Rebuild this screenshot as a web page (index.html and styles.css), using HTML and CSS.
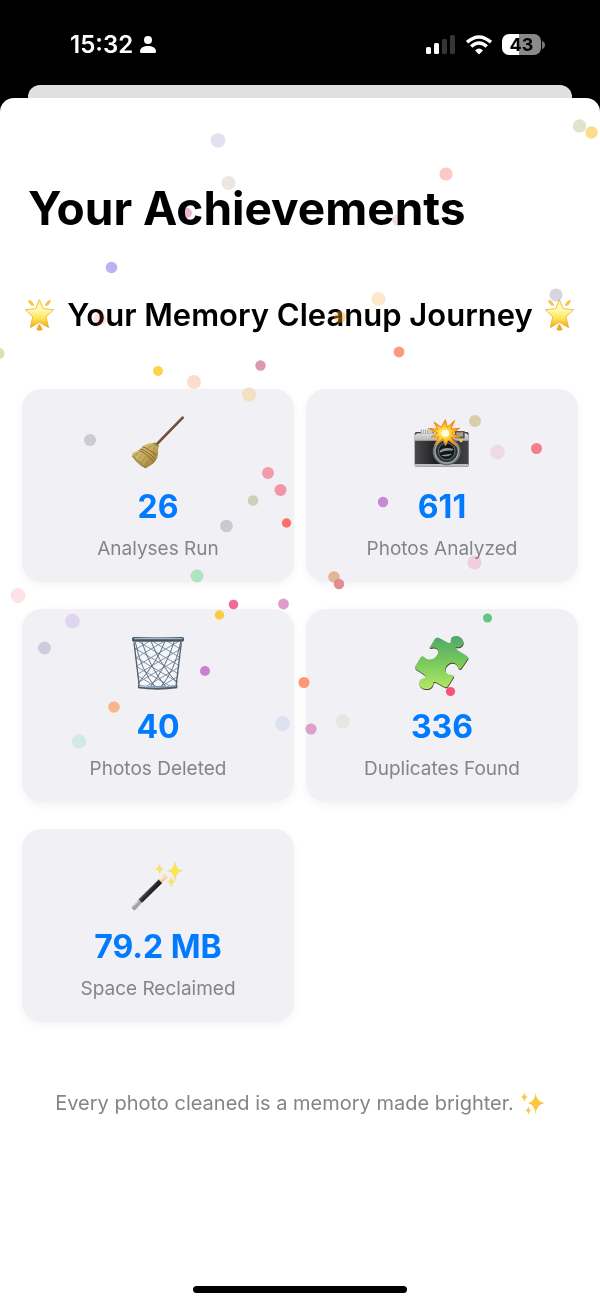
FILE: index.html
```html
<!DOCTYPE html>
<html lang="en">
<head>
<meta charset="utf-8">
<meta name="viewport" content="width=device-width, initial-scale=1">
<title>Your Achievements</title>
<link rel="stylesheet" href="styles.css">
</head>
<body>
<svg width="0" height="0" class="defs" aria-hidden="true">
  <defs>
    <linearGradient id="starFill" x1="0" y1="0" x2="0" y2="1"><stop offset="0" stop-color="#fff08a"/><stop offset=".35" stop-color="#fff9b8"/><stop offset=".65" stop-color="#fde75a"/><stop offset="1" stop-color="#f5a60c"/></linearGradient>
    <linearGradient id="straw" x1="0" y1="0" x2="1" y2="1"><stop offset="0" stop-color="#e0cf86"/><stop offset=".5" stop-color="#c5ac5e"/><stop offset="1" stop-color="#876a2b"/></linearGradient>
    <linearGradient id="silver" x1="0" y1="0" x2="0" y2="1"><stop offset="0" stop-color="#dededf"/><stop offset="1" stop-color="#b5b5b8"/></linearGradient>
    <linearGradient id="leather" x1="0" y1="0" x2="1" y2="0"><stop offset="0" stop-color="#4a4a4c"/><stop offset=".45" stop-color="#19191b"/><stop offset="1" stop-color="#454547"/></linearGradient>
    <radialGradient id="burst"><stop offset="0" stop-color="#fffbd0"/><stop offset=".3" stop-color="#ffe14a"/><stop offset="1" stop-color="#f58a0b"/></radialGradient>
    <linearGradient id="piece" x1="0" y1="0" x2="0" y2="1"><stop offset="0" stop-color="#4ea76a"/><stop offset=".5" stop-color="#79c95c"/><stop offset="1" stop-color="#b2e966"/></linearGradient>
    <linearGradient id="rod" gradientUnits="userSpaceOnUse" x1="112" y1="132" x2="126" y2="144"><stop offset="0" stop-color="#5b5b60"/><stop offset=".5" stop-color="#303034"/><stop offset="1" stop-color="#19191b"/></linearGradient>
    <clipPath id="basket"><path d="M70 64 86 202H201L216 64Z"/></clipPath>
    <symbol id="star" viewBox="78 178 90 96">
      <path d="M121 180 133 207 164 210 141 231 149 264 121 248 94 264 101 231 79 210 110 207Z" fill="url(#starFill)" stroke="#eeb32f" stroke-width="2.5" stroke-linejoin="round"/>
      <path d="M88 182Q98 181 105 197Q94 202 88 182ZM155 182Q145 181 138 197Q149 202 155 182Z" fill="#fac83c" stroke="#e7a82d"/>
      <path d="M121 253 130 269Q121 276 113 269Z" fill="#f5a91c" stroke="#d98c16"/>
    </symbol>
  </defs>
</svg>
<div class="phone">
  <header class="status">
    <div class="status-side">
      <span class="clock">15:32</span>
      <svg class="person" viewBox="0 0 16 17" aria-hidden="true"><circle cx="8" cy="4" r="4"/><path d="M0 15.500C0 11.500 4 10 8 10s8 1.500 8 5.500q0 1.500-1.500 1.500h-13Q0 17 0 15.500Z"/></svg>
    </div>
    <div class="status-side">
      <svg class="signal" viewBox="0 0 30 20" aria-hidden="true"><rect x="0" y="12" width="5" height="7" rx="1.500"/><rect x="8" y="8" width="5" height="11" rx="1.500"/><g fill="#363636"><rect x="16" y="4" width="5" height="15" rx="1.500"/><rect x="24" y="0" width="5" height="19" rx="1.500"/></g></svg>
      <svg class="wifi" viewBox="0 0 26 20" aria-hidden="true"><g fill="none" stroke="#fff" stroke-width="3.400"><path d="M1 7.200Q13-3.200 25 7.200"/><path d="M5.200 11.600Q13 4.600 20.800 11.600"/></g><path d="M9 15.400Q13 11.600 17 15.400L13 19.500Z"/></svg>
      <div class="battery"><span class="battery-level">43</span><svg class="battery-cap" viewBox="0 0 3 8" aria-hidden="true"><path d="M0 0Q3 1 3 4T0 8Z"/></svg></div>
    </div>
  </header>
  <div class="sheet-behind"></div>
  <main class="sheet">
    <h1 class="title">Your Achievements</h1>
    <h2 class="subtitle"><svg class="star" aria-hidden="true"><use href="#star"/></svg><span>Your Memory Cleanup Journey</span><svg class="star" aria-hidden="true"><use href="#star"/></svg></h2>
    <section class="stats">
      <article class="card">
        <svg class="icon" viewBox="60 39 168 168" aria-hidden="true">
          <path d="M142 131 218 53" stroke="#6d4936" stroke-width="8" stroke-linecap="round"/><path d="M142 128 217 51" stroke="#96705a" stroke-width="2"/>
          <path d="M132 128 147 137 144 149Q147 175 129 191L108 205Q82 194 66 170L67 159Q88 151 97 140 108 129 132 128Z" fill="url(#straw)"/>
          <path d="M98 140Q112 144 139 166M92 147Q110 152 134 176M88 152Q106 158 129 183" fill="none" stroke="#7c4b22" stroke-width="2.500"/>
          <path d="M131 134 112 145M136 138 128 159M87 157 75 170M97 162 84 180M108 168 94 189M118 177 104 200M82 160 70 167" stroke="#8d7132" stroke-width="1.500"/><path d="M131 129 145 138" stroke="#8a8540" stroke-width="5"/>
          <path d="M66 169 75 173 79 182 88 185 94 196 108 204" fill="none" stroke="#7b5a25" stroke-width="2"/>
        </svg>
        <strong class="value">26</strong><span class="label">Analyses Run</span>
      </article>
      <article class="card">
        <svg class="icon" viewBox="40 39 168 168" aria-hidden="true">
          <rect x="42" y="96" width="162" height="104" rx="5" fill="url(#leather)"/><path d="M42 122V109Q44 100 54 100H192Q202 100 204 110V122Z" fill="url(#silver)"/>
          <path d="M60 89H98V102H60Z" fill="#a3a7aa"/><path d="M65 89V101M71 89V101M78 89V101M85 89V101M91 89V101" stroke="#eef0f1" stroke-width="3"/>
          <path d="M102 86H160L164 104H98Z" fill="#d4d4d5"/><rect x="163" y="93" width="29" height="22" fill="#57534e"/><rect x="167" y="97" width="20" height="13" fill="#aaa28b"/>
          <path d="M43 192H203V196Q203 200 198 200H48Q43 200 43 196Z" fill="#bcbdbe"/>
          <circle cx="138" cy="154" r="42" fill="#646c6e"/><circle cx="138" cy="154" r="37" fill="#a2abad"/><circle cx="138" cy="154" r="33" fill="#2e3538"/><circle cx="138" cy="154" r="25" fill="#111719" stroke="#667175" stroke-width="3"/>
          <path d="M117 153Q130 139 158 147L154 152Q134 150 117 158ZM121 166Q139 174 155 161" fill="#8d999d"/>
          <circle cx="181" cy="122" r="5" fill="#f5cb35"/>
          <path d="M134 59 140 82 162 61 151 87 177 85 153 100 177 112 151 112 168 139 143 120 134 137 127 117 102 135 114 111 91 111 111 99 83 85 111 88 100 66 122 82Z" fill="url(#burst)" stroke="#ed8a0c" stroke-width="3"/><circle cx="134" cy="100" r="11" fill="#fffde0"/>
        </svg>
        <strong class="value">611</strong><span class="label">Photos Analyzed</span>
      </article>
      <article class="card">
        <svg class="icon" viewBox="60 39 168 168" aria-hidden="true">
          <path d="M68 59 85 202Q144 211 202 202L218 59Z" fill="#f3f6fa"/>
          <g clip-path="url(#basket)" fill="none" stroke-width="3"><path stroke="#8794a1" d="M60 50 230 150M60 76 230 176M60 102 230 202M60 128 230 228M60 154 230 254M60 180 230 280M100 48 230 124M145 48 230 98M230 50 60 150M230 76 60 176M230 102 60 202M230 128 60 228M230 154 60 254M230 180 60 280M190 48 60 124M145 48 60 98"/><path stroke="#626f7c" d="M76 66Q92 150 138 204M96 66Q118 140 170 204M124 66Q148 130 202 190M212 66Q196 150 150 204M192 66Q170 140 118 204M164 66Q140 130 84 190"/></g>
          <path d="M72 67 88 200M214 67 198 200" stroke="#56616d" stroke-width="4"/>
          <rect x="66" y="51" width="156" height="14" rx="5" fill="#46535f"/><path d="M72 54Q144 49 217 54V58H72Z" fill="#a4b7c7"/>
          <path d="M84 195Q144 203 202 195V205Q144 213 84 205Z" fill="#4e5b68"/><path d="M88 196Q144 204 198 196V199Q144 207 88 200Z" fill="#b3cae1"/>
        </svg>
        <strong class="value">40</strong><span class="label">Photos Deleted</span>
      </article>
      <article class="card">
        <svg class="icon" viewBox="40 39 168 168" aria-hidden="true">
          <path d="M86 84 102 58Q107 50 116 54L138 66Q147 71 150 67C151 61 149 55 155 51C166 44 184 50 187 62C191 74 181 83 169 82C163 81 164 86 170 90L198 107Q205 111 201 117L183 143Q178 150 173 144C169 129 155 124 144 132C131 141 131 154 141 162C147 166 157 162 160 169L142 198Q137 205 130 200L110 189Q101 184 98 188C98 198 90 209 75 207C59 205 52 192 57 182C61 174 71 177 75 172C78 168 69 163 65 160L46 148Q40 144 44 138L60 112Q65 105 71 112C80 122 95 120 104 112C114 103 115 91 107 85C101 80 91 85 86 84Z" transform="translate(1 3)" fill="#483c2b"/>
          <path d="M86 84 102 58Q107 50 116 54L138 66Q147 71 150 67C151 61 149 55 155 51C166 44 184 50 187 62C191 74 181 83 169 82C163 81 164 86 170 90L198 107Q205 111 201 117L183 143Q178 150 173 144C169 129 155 124 144 132C131 141 131 154 141 162C147 166 157 162 160 169L142 198Q137 205 130 200L110 189Q101 184 98 188C98 198 90 209 75 207C59 205 52 192 57 182C61 174 71 177 75 172C78 168 69 163 65 160L46 148Q40 144 44 138L60 112Q65 105 71 112C80 122 95 120 104 112C114 103 115 91 107 85C101 80 91 85 86 84Z" fill="url(#piece)"/>
        </svg>
        <strong class="value">336</strong><span class="label">Duplicates Found</span>
      </article>
      <article class="card">
        <svg class="icon" viewBox="60 24 168 168" aria-hidden="true">
          <path d="M73 188 91 168" stroke="#a3a4aa" stroke-width="14" stroke-linecap="round"/><path d="M70 183 86 166" stroke="#d5d6dc" stroke-width="4"/>
          <path d="M91 168 152 108" stroke="url(#rod)" stroke-width="15"/><path d="M151 109 169 92" stroke="#ecd2a0" stroke-width="14"/><path d="M149 104 175 87" stroke="#fff2cc" stroke-width="4"/>
          <g fill="#fae64d" stroke="#efd064" stroke-width="1"><path d="M195 50Q197 75 218 77Q197 80 195 107Q193 80 172 77Q193 75 195 50Z"/><path d="M149 58Q151 71 160 72Q151 74 149 86Q147 74 137 72Q147 71 149 58Z"/><path d="M184 96Q186 109 194 110Q186 112 184 125Q182 112 173 110Q182 109 184 96Z"/></g>
        </svg>
        <strong class="value">79.2 MB</strong><span class="label">Space Reclaimed</span>
      </article>
    </section>
    <p class="closing"><span>Every photo cleaned is a memory made brighter.</span>
      <svg class="sparkles" viewBox="105 62 75 72" aria-hidden="true"><g fill="#fac63e"><path d="M152 67Q154 94 179 98Q154 102 152 132Q150 102 128 98Q150 94 152 67Z"/><path d="M118 64Q119 78 129 80Q119 82 118 97Q117 82 107 80Q117 78 118 64Z"/><path d="M130 106Q131 118 140 120Q131 122 130 134Q129 122 120 120Q129 118 130 106Z"/></g></svg>
    </p>
    <div class="home-indicator"></div>
  </main>
  <svg class="confetti confetti-under" aria-hidden="true">
    <circle cx="228.500" cy="183" r="7" fill="#ece6e0"/><circle cx="187" cy="213" r="5" fill="#eab6cf"/><circle cx="398" cy="220" r="6" fill="#f8dce2"/><circle cx="378.500" cy="299" r="7" fill="#fee8cc"/><circle cx="474.500" cy="562.500" r="7" fill="#fddce6"/>
  </svg>
  <svg class="confetti" aria-hidden="true">
    <circle cx="218" cy="140.500" r="7.300" fill="#e2e1f2"/><circle cx="579.500" cy="126" r="6.700" fill="#e0e3cd"/><circle cx="591.500" cy="132.500" r="6.200" fill="#fbdd8b"/><circle cx="446" cy="174" r="6.600" fill="#fcc9c4"/><circle cx="111.500" cy="267.500" r="5.800" fill="#b9b2f3"/><circle cx="-1" cy="353.500" r="5.500" fill="#dfe0b0"/><circle cx="158" cy="371" r="5" fill="#fcd34b"/><circle cx="260.500" cy="365.500" r="5.200" fill="#dd9aae"/><circle cx="194" cy="382" r="7" fill="#fbdccd"/><circle cx="556" cy="295" r="6.500" fill="#aeacbf" fill-opacity=".5"/><circle cx="399" cy="352" r="5.400" fill="#fd9a7b"/><circle cx="18" cy="595.500" r="7.400" fill="#fde2e6"/>
    <circle cx="340" cy="317" r="6" fill="#f9a01b" fill-opacity=".4"/><circle cx="100" cy="319" r="6.500" fill="#f44" fill-opacity=".16"/>
    <circle cx="249" cy="394.500" r="7" fill="#f3dfc2"/><circle cx="90" cy="440" r="6" fill="#cbcad5"/><circle cx="268" cy="473" r="6" fill="#f59aaa"/><circle cx="280.500" cy="490" r="6" fill="#f494a6"/><circle cx="475" cy="421" r="6" fill="#dccda9"/><circle cx="497.500" cy="452" r="7.300" fill="#eddae3"/><circle cx="536.500" cy="448.500" r="5.500" fill="#f67f8d"/><circle cx="226.500" cy="526" r="6.300" fill="#c8cad2"/><circle cx="253" cy="500.500" r="5.300" fill="#cfcfb9"/><circle cx="286.500" cy="523" r="4.700" fill="#f97264"/><circle cx="197" cy="576" r="6.500" fill="#aee4c0"/><circle cx="72.500" cy="621" r="7.300" fill="#ddd6ee"/><circle cx="44.500" cy="648" r="6.500" fill="#cdccdc"/><circle cx="233.500" cy="604.500" r="4.800" fill="#f26b95"/><circle cx="219.500" cy="615" r="4.700" fill="#f9cb42"/><circle cx="283.500" cy="604" r="5.400" fill="#dd9ccb"/><circle cx="205" cy="671" r="5" fill="#cb80d2"/><circle cx="114" cy="707" r="5.800" fill="#fab58b"/><circle cx="79" cy="741.500" r="7.200" fill="#d3eae4"/><circle cx="282.500" cy="723.500" r="7.500" fill="#dde2f1"/><circle cx="383" cy="502" r="5.200" fill="#c987d5"/><circle cx="334" cy="577" r="5.800" fill="#dfb794"/><circle cx="339" cy="584" r="5.200" fill="#e0808a" fill-opacity=".9"/><circle cx="487.500" cy="618" r="4.500" fill="#65c584"/><circle cx="304" cy="682.500" r="5.500" fill="#fe9872"/><circle cx="311" cy="729" r="5.600" fill="#dda0ca"/><circle cx="343" cy="721.500" r="7.200" fill="#e4e8e2"/><circle cx="450.500" cy="691.500" r="4.600" fill="#f85574"/>
  </svg>
</div>
</body>
</html>
```
FILE: styles.css
```css
* { box-sizing: border-box; }
body { margin: 0; background: #000; color: #000; font-family: Inter, "Liberation Sans", sans-serif; }
.defs { position: absolute; }
.phone { position: relative; min-height: 100vh; display: flex; flex-direction: column; overflow: hidden; }

.status { height: 85px; padding: 4px 55px 0 70px; display: flex; align-items: center; justify-content: space-between; color: #fff; }
.status-side { display: flex; align-items: center; gap: 10px; }
.status-side:first-child { gap: 7px; }
.status svg { fill: #fff; }
.clock { font-size: 24px; line-height: 28px; font-weight: 600; }
.person { width: 16px; height: 17px; }
.signal { width: 30px; height: 20px; }
.wifi { width: 26px; height: 20px; }
.battery { display: flex; align-items: center; gap: 1px; }
.battery-level { width: 39px; height: 21px; border-radius: 7px; background: linear-gradient(90deg, #fff 43%, #8a8a8a 43%); color: #000; font-size: 18px; line-height: 21px; font-weight: 700; text-align: center; }
.battery .battery-cap { width: 3px; height: 8px; fill: #777; }

.sheet-behind { height: 13px; margin: 0 28px; border-radius: 12px 12px 0 0; background: #e0e0e0; }
.sheet { flex: 1; display: flex; flex-direction: column; padding: 82px 22px 11px; border-radius: 14px 14px 0 0; background: #fff; }
.title { margin: 0 6px; font-size: 46px; line-height: 56px; font-weight: 700; white-space: nowrap; }
.subtitle { margin: 59px 0 54px; display: flex; align-items: center; justify-content: center; gap: 12px; font-size: 31px; line-height: 40px; font-weight: 600; white-space: nowrap; }
.star { width: 30px; height: 32px; flex: none; }

.stats { display: grid; grid-template-columns: 1fr 1fr; gap: 27px 12px; }
.card { display: flex; flex-direction: column; align-items: center; padding: 24px 8px 21px; border-radius: 20px; background: #f1f0f5; box-shadow: 0 3px 10px rgba(0, 0, 0, .05); }
.icon { width: 56px; height: 56px; overflow: visible; }
.value { margin: 16px 0 8px; font-size: 32px; line-height: 44px; font-weight: 700; color: #007aff; }
.label { font-size: 19px; line-height: 24px; color: #858589; }

.closing { margin: 68px 0 0; display: flex; align-items: center; justify-content: center; gap: 6px; font-size: 20px; line-height: 26px; color: #858589; }
.sparkles { width: 25px; height: 24px; }
.home-indicator { width: 214px; height: 7px; margin: auto auto 0; border-radius: 4px; background: #000; }

.confetti { position: absolute; inset: 0; width: 100%; height: 100%; pointer-events: none; }
.confetti-under { mix-blend-mode: multiply; }
```
